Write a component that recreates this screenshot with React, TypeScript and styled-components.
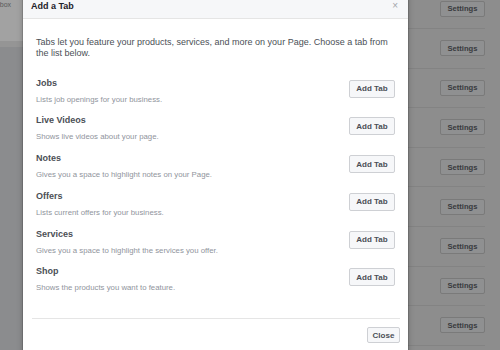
import React from "react";
import styled, { createGlobalStyle } from "styled-components";

const Global = createGlobalStyle`
  html, body { margin: 0; padding: 0; }
  body {
    width: 500px;
    height: 350px;
    overflow: hidden;
    font-family: "Liberation Sans", Arial, Helvetica, sans-serif;
    background: #8d8d8d;
  }
  #root { width: 500px; height: 350px; position: relative; overflow: hidden; }
`;

const Page = styled.div`
  display: flex;
  width: 500px;
  height: 350px;
  background: #8d8d8d;
`;

const Sidebar = styled.div`
  width: 100px;
  flex: none;
  display: flex;
  flex-direction: column;
  background: #8b8c8e;
`;

const SideTop = styled.div`
  height: 41px;
  background: #a2a2a2;
  font-size: 7px;
  color: #5a5a5a;
  padding-top: 1px;
  box-sizing: border-box;
  overflow: hidden;
  white-space: nowrap;
`;

const SideLabel = styled.span`
  display: inline-block;
  margin-left: -6px;
`;

const SideBand = styled.div`
  height: 6px;
  background: #959595;
`;

const Main = styled.div`
  flex: 1;
  display: flex;
  flex-direction: column;
  padding-right: 15px;
  margin-top: -10.6px;
`;

const BgRow = styled.div`
  height: 39.6px;
  flex: none;
  box-sizing: border-box;
  border-bottom: 1px solid #838383;
  display: flex;
  align-items: center;
  justify-content: flex-end;
`;

const BgButton = styled.div`
  width: 45px;
  height: 16px;
  box-sizing: border-box;
  border: 1px solid #7a7a7a;
  background: #8f9091;
  border-radius: 2px;
  color: #383a3d;
  font-size: 7.6px;
  font-weight: bold;
  display: flex;
  align-items: center;
  justify-content: center;
`;

const Modal = styled.div`
  position: absolute;
  left: 23px;
  top: -7px;
  width: 385px;
  height: 380px;
  background: #fff;
  box-shadow: 0 0 0 1px rgba(0, 0, 0, 0.12), 0 2px 6px rgba(0, 0, 0, 0.25);
  display: flex;
  flex-direction: column;
`;

const Header = styled.div`
  height: 26px;
  flex: none;
  box-sizing: border-box;
  background: #f6f7f9;
  border-bottom: 1px solid #e5e5e5;
  display: flex;
  align-items: center;
  justify-content: space-between;
  padding: 0 10px 0 8px;
`;

const Title = styled.div`
  font-size: 9px;
  font-weight: bold;
  color: #1d2129;
  line-height: 12px;
`;

const CloseX = styled.div`
  font-size: 10px;
  color: #a3a6ab;
  line-height: 10px;
`;

const Body = styled.div`
  padding: 18px 13px 0 13px;
  display: flex;
  flex-direction: column;
`;

const Intro = styled.p`
  margin: 0 0 17.5px 0;
  font-size: 9px;
  line-height: 11px;
  color: #4b4f56;
`;

const Row = styled.div`
  height: 37.8px;
  flex: none;
  display: flex;
  align-items: flex-start;
  justify-content: space-between;
`;

const RowText = styled.div`
  display: flex;
  flex-direction: column;
`;

const RowTitle = styled.div`
  font-size: 9px;
  font-weight: bold;
  color: #4b4f56;
  line-height: 12px;
`;

const RowDesc = styled.div`
  font-size: 7.8px;
  color: #90949c;
  line-height: 12px;
  margin-top: 5px;
`;

const Button = styled.button<{ $small?: boolean }>`
  font-family: "Liberation Sans", Arial, Helvetica, sans-serif;
  height: ${(p) => (p.$small ? "16px" : "18px")};
  width: ${(p) => (p.$small ? "33px" : "46px")};
  margin-top: ${(p) => (p.$small ? "0" : "3px")};
  padding: 0;
  box-sizing: border-box;
  border: 1px solid #ced0d4;
  border-radius: 2px;
  background: #f6f7f9;
  color: #4b4f56;
  font-size: 8px;
  font-weight: bold;
  display: flex;
  align-items: center;
  justify-content: center;
`;

const Footer = styled.div`
  margin: 15px 8px 0 9px;
  border-top: 1px solid #e5e5e5;
  padding-top: 8px;
  display: flex;
  justify-content: flex-end;
`;

const tabs = [
  { name: "Jobs", desc: "Lists job openings for your business." },
  { name: "Live Videos", desc: "Shows live videos about your page." },
  { name: "Notes", desc: "Gives you a space to highlight notes on your Page." },
  { name: "Offers", desc: "Lists current offers for your business." },
  { name: "Services", desc: "Gives you a space to highlight the services you offer." },
  { name: "Shop", desc: "Shows the products you want to feature." },
];

export default function App() {
  return (
    <>
      <Global />
      <Page>
        <Sidebar>
          <SideTop>
            <SideLabel>Inbox</SideLabel>
          </SideTop>
          <SideBand />
        </Sidebar>
        <Main>
          {Array.from({ length: 9 }).map((_, i) => (
            <BgRow key={i}>
              <BgButton>Settings</BgButton>
            </BgRow>
          ))}
        </Main>
      </Page>
      <Modal>
        <Header>
          <Title>Add a Tab</Title>
          <CloseX>×</CloseX>
        </Header>
        <Body>
          <Intro>
            Tabs let you feature your products, services, and more on your Page. Choose a tab from
            the list below.
          </Intro>
          {tabs.map((t) => (
            <Row key={t.name}>
              <RowText>
                <RowTitle>{t.name}</RowTitle>
                <RowDesc>{t.desc}</RowDesc>
              </RowText>
              <Button>Add Tab</Button>
            </Row>
          ))}
        </Body>
        <Footer>
          <Button $small>Close</Button>
        </Footer>
      </Modal>
    </>
  );
}
